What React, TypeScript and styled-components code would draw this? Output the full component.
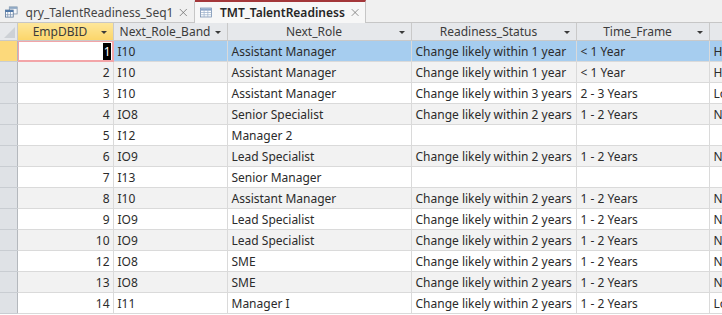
import React from 'react'
import styled, { createGlobalStyle } from 'styled-components'

const GlobalStyle = createGlobalStyle`
  html, body {
    margin: 0;
    padding: 0;
    background: #ffffff;
  }
  body {
    font-family: 'Segoe UI', 'Noto Sans', sans-serif;
    font-size: 12px;
    color: #222;
    overflow: hidden;
  }
`

type Row = {
  id: number
  band: string
  role: string
  status: string
  frame: string
  extra: string
}

const rows: Row[] = [
  { id: 1, band: 'I10', role: 'Assistant Manager', status: 'Change likely within 1 year', frame: '< 1 Year', extra: 'Hi' },
  { id: 2, band: 'I10', role: 'Assistant Manager', status: 'Change likely within 1 year', frame: '< 1 Year', extra: 'Hi' },
  { id: 3, band: 'I10', role: 'Assistant Manager', status: 'Change likely within 3 years', frame: '2 - 3 Years', extra: 'Lo' },
  { id: 4, band: 'IO8', role: 'Senior Specialist', status: 'Change likely within 2 years', frame: '1 - 2 Years', extra: 'Ne' },
  { id: 5, band: 'I12', role: 'Manager 2', status: '', frame: '', extra: '' },
  { id: 6, band: 'IO9', role: 'Lead Specialist', status: 'Change likely within 2 years', frame: '1 - 2 Years', extra: 'Ne' },
  { id: 7, band: 'I13', role: 'Senior Manager', status: '', frame: '', extra: '' },
  { id: 8, band: 'I10', role: 'Assistant Manager', status: 'Change likely within 2 years', frame: '1 - 2 Years', extra: 'Ne' },
  { id: 9, band: 'IO9', role: 'Lead Specialist', status: 'Change likely within 2 years', frame: '1 - 2 Years', extra: 'Ne' },
  { id: 10, band: 'IO9', role: 'Lead Specialist', status: 'Change likely within 2 years', frame: '1 - 2 Years', extra: 'Ne' },
  { id: 12, band: 'IO8', role: 'SME', status: 'Change likely within 2 years', frame: '1 - 2 Years', extra: 'Ne' },
  { id: 13, band: 'IO8', role: 'SME', status: 'Change likely within 2 years', frame: '1 - 2 Years', extra: 'Ne' },
  { id: 14, band: 'I11', role: 'Manager I', status: 'Change likely within 2 years', frame: '1 - 2 Years', extra: 'Lo' },
]

const columns = [
  { name: 'EmpDBID', width: 96 },
  { name: 'Next_Role_Band', width: 114 },
  { name: 'Next_Role', width: 184 },
  { name: 'Readiness_Status', width: 165 },
  { name: 'Time_Frame', width: 133 },
  { name: 'Current', width: 120 },
]

const Window = styled.div`
  width: 722px;
  height: 315px;
  background: #f0f0f0;
  display: flex;
  flex-direction: column;
  overflow: hidden;
`

const TabStrip = styled.div`
  height: 23px;
  display: flex;
  align-items: stretch;
  background: #f0f0f0;
  border-bottom: 1px solid #c6c6c6;
  box-sizing: border-box;
`

const Tab = styled.div<{ $active?: boolean }>`
  display: flex;
  align-items: center;
  gap: 6px;
  padding: 0 6px 0 5px;
  box-sizing: border-box;
  width: ${p => (p.$active ? 171 : 195)}px;
  background: ${p => (p.$active ? '#f7f7f7' : '#f0f0f0')};
  border-top: 2px solid ${p => (p.$active ? '#a4373a' : 'transparent')};
  border-right: 1px solid #c6c6c6;
  margin-bottom: ${p => (p.$active ? '-1px' : '0')};
  color: ${p => (p.$active ? '#262626' : '#444')};
  font-weight: ${p => (p.$active ? 600 : 400)};
  font-size: 12px;
`

const TabLabel = styled.span`
  flex: 1;
  white-space: nowrap;
  padding-left: 2px;
`

const CloseIcon = () => (
  <svg width="11" height="11" viewBox="0 0 11 11">
    <path d="M1 1 L10 10 M10 1 L1 10" stroke="#6d6d6d" strokeWidth="1" fill="none" />
  </svg>
)

const QueryIcon = () => (
  <svg width="16" height="14" viewBox="0 0 16 14">
    <rect x="5.5" y="0.5" width="10" height="9" fill="#f4f6f9" stroke="#7a8fa6" />
    <rect x="5.5" y="0.5" width="10" height="2.5" fill="#8fa8c4" />
    <rect x="0.5" y="4.5" width="10" height="9" fill="#ffffff" stroke="#4f6e93" />
    <rect x="0.5" y="4.5" width="10" height="2.5" fill="#4f77a8" />
    <path d="M3.5 7 V13.5 M7 7 V13.5 M1 10.5 H10" stroke="#7d96b3" strokeWidth="1" />
  </svg>
)

const TableIcon = () => (
  <svg width="16" height="13" viewBox="0 0 16 13">
    <rect x="0.5" y="0.5" width="15" height="12" fill="#ffffff" stroke="#6d87ab" />
    <rect x="1" y="1" width="14" height="3" fill="#8ba5c9" />
    <path d="M5.5 1 V12.5 M10.5 1 V12.5 M1 6.5 H15 M1 9.5 H15" stroke="#9cb1cc" strokeWidth="1" />
  </svg>
)

const Sheet = styled.div`
  flex: 1;
  background: #ffffff;
  overflow: hidden;
`

const Grid = styled.table`
  border-collapse: collapse;
  table-layout: fixed;
  width: ${17 + columns.reduce((s, c) => s + c.width, 0)}px;
  font-size: 12px;
`

const HeadCell = styled.th<{ $current?: boolean }>`
  height: 17px;
  padding: 0 14px 0 4px;
  position: relative;
  font-weight: 400;
  color: #3b3b3b;
  text-align: center;
  white-space: nowrap;
  overflow: hidden;
  background: ${p => (p.$current ? 'linear-gradient(#fde69a, #fbd56a)' : '#e6e8eb')};
  border-right: 1px solid #c9c9c9;
  border-bottom: 1px solid #c9c9c9;
`

const Arrow = styled.span`
  position: absolute;
  right: 6px;
  top: 8px;
  width: 0;
  height: 0;
  border-left: 3px solid transparent;
  border-right: 3px solid transparent;
  border-top: 3px solid #3a3a3a;
`

const Corner = styled.th`
  width: 17px;
  padding: 0;
  background: #e6e8eb;
  border-right: 1px solid #c9c9c9;
  border-bottom: 1px solid #c9c9c9;
  position: relative;
`

const CornerMark = styled.span`
  position: absolute;
  right: 2px;
  bottom: 2px;
  width: 0;
  height: 0;
  border-left: 11px solid transparent;
  border-bottom: 11px solid #cdd1d6;
`

const Selector = styled.td<{ $current?: boolean }>`
  padding: 0;
  height: 20px;
  background: ${p => (p.$current ? '#fcd97b' : '#dfe2e6')};
  border-right: 1px solid #b4b8bd;
  border-bottom: 1px solid #c9cdd2;
`

const Cell = styled.td<{ $alt?: boolean; $selected?: boolean; $num?: boolean }>`
  height: 20px;
  padding: 0 ${p => (p.$num ? '3px' : '2px')} 0 4px;
  text-align: ${p => (p.$num ? 'right' : 'left')};
  white-space: nowrap;
  overflow: hidden;
  color: #2b2b2b;
  background: ${p => (p.$selected ? '#a6cdef' : p.$alt ? '#f2f2f2' : '#ffffff')};
  border-right: 1px solid #dadada;
  border-bottom: 1px solid #dadada;
`

const FocusCell = styled.td`
  height: 20px;
  padding: 0 2px 0 4px;
  text-align: right;
  background: #ffffff;
  box-shadow: inset 0 0 0 1px #f3a5a8;
  border-right: 1px solid #f3a5a8;
  border-bottom: 1px solid #f3a5a8;
`

const Highlighted = styled.span`
  background: #000;
  color: #fff;
  padding: 0 0 0 1px;
`

export default function App() {
  return (
    <Window>
      <GlobalStyle />
      <TabStrip>
        <Tab>
          <QueryIcon />
          <TabLabel>qry_TalentReadiness_Seq1</TabLabel>
          <CloseIcon />
        </Tab>
        <Tab $active>
          <TableIcon />
          <TabLabel>TMT_TalentReadiness</TabLabel>
          <CloseIcon />
        </Tab>
      </TabStrip>
      <Sheet>
        <Grid>
          <colgroup>
            <col style={{ width: 17 }} />
            {columns.map(c => (
              <col key={c.name} style={{ width: c.width }} />
            ))}
          </colgroup>
          <thead>
            <tr>
              <Corner>
                <CornerMark />
              </Corner>
              {columns.map((c, i) => (
                <HeadCell key={c.name} $current={i === 0}>
                  {c.name}
                  <Arrow />
                </HeadCell>
              ))}
            </tr>
          </thead>
          <tbody>
            {rows.map((r, i) => {
              const sel = i === 0
              const alt = i % 2 === 1
              return (
                <tr key={r.id}>
                  <Selector $current={sel} />
                  {sel ? (
                    <FocusCell>
                      <Highlighted>{r.id}</Highlighted>
                    </FocusCell>
                  ) : (
                    <Cell $num $alt={alt}>{r.id}</Cell>
                  )}
                  <Cell $alt={alt} $selected={sel}>{r.band}</Cell>
                  <Cell $alt={alt} $selected={sel}>{r.role}</Cell>
                  <Cell $alt={alt} $selected={sel}>{r.status}</Cell>
                  <Cell $alt={alt} $selected={sel}>{r.frame}</Cell>
                  <Cell $alt={alt} $selected={sel}>{r.extra}</Cell>
                </tr>
              )
            })}
          </tbody>
        </Grid>
      </Sheet>
    </Window>
  )
}
